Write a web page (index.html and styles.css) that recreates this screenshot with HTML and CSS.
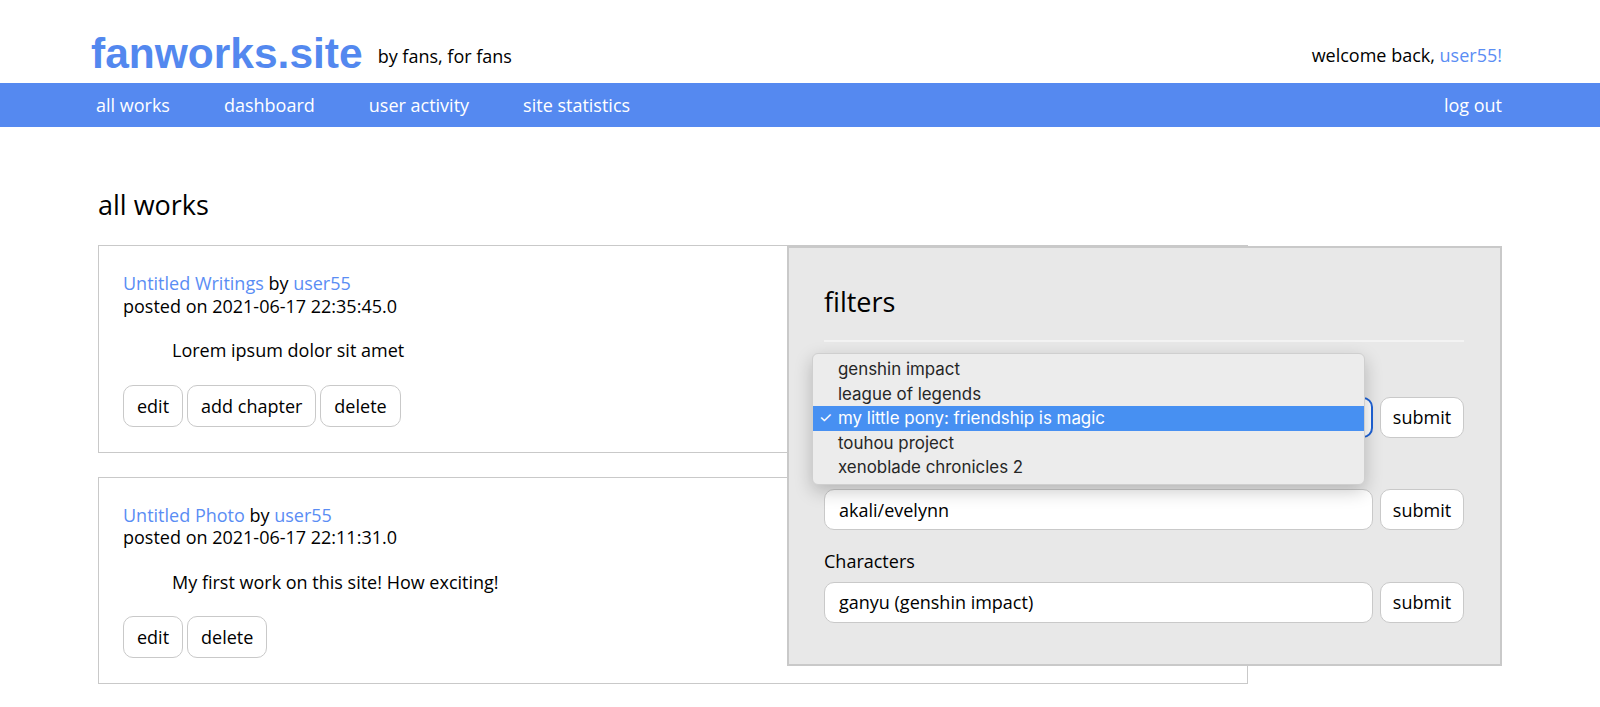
FILE: index.html
```html
<!DOCTYPE html>
<html lang="en">
<head>
<meta charset="utf-8">
<title>fanworks.site - all works</title>
<link rel="stylesheet" href="styles.css">
</head>
<body>
<header class="top">
  <a class="logo" href="#">fanworks.site</a>
  <span class="tagline">by fans, for fans</span>
  <span class="welcome">welcome back, <a class="link" href="#">user55!</a></span>
</header>
<nav class="navbar">
  <a href="#">all works</a>
  <a href="#">dashboard</a>
  <a href="#">user activity</a>
  <a href="#">site statistics</a>
  <a class="logout" href="#">log out</a>
</nav>
<main class="content">
  <h2 class="page-title">all works</h2>
  <div class="works">
    <article class="work">
      <div class="work-head"><a class="link" href="#">Untitled Writings</a> by <a class="link" href="#">user55</a></div>
      <div class="work-date">posted on 2021-06-17 22:35:45.0</div>
      <p class="work-summary">Lorem ipsum dolor sit amet</p>
      <div class="actions">
        <button class="btn">edit</button>
        <button class="btn">add chapter</button>
        <button class="btn">delete</button>
      </div>
    </article>
    <article class="work">
      <div class="work-head"><a class="link" href="#">Untitled Photo</a> by <a class="link" href="#">user55</a></div>
      <div class="work-date">posted on 2021-06-17 22:11:31.0</div>
      <p class="work-summary">My first work on this site! How exciting!</p>
      <div class="actions">
        <button class="btn">edit</button>
        <button class="btn">delete</button>
      </div>
    </article>
  </div>
</main>
<aside class="filters">
  <h2 class="filters-title">filters</h2>
  <hr class="rule">
  <div class="field field-open">
    <label class="field-label">Fandoms</label>
    <div class="field-row">
      <div class="select">my little pony: friendship is magic</div>
      <button class="btn submit">submit</button>
    </div>
    <ul class="popup">
      <li>genshin impact</li>
      <li>league of legends</li>
      <li class="selected"><span class="check">✓</span>my little pony: friendship is magic</li>
      <li>touhou project</li>
      <li>xenoblade chronicles 2</li>
    </ul>
  </div>
  <div class="field">
    <label class="field-label">Relationships</label>
    <div class="field-row">
      <input class="text-input" type="text" value="akali/evelynn">
      <button class="btn submit">submit</button>
    </div>
  </div>
  <div class="field">
    <label class="field-label">Characters</label>
    <div class="field-row">
      <input class="text-input" type="text" value="ganyu (genshin impact)">
      <button class="btn submit">submit</button>
    </div>
  </div>
</aside>
</body>
</html>
```
FILE: styles.css
```css
* { box-sizing: border-box; }

html, body {
  margin: 0;
  padding: 0;
}

body {
  position: relative;
  font-family: "Open Sans", "Noto Sans", sans-serif;
  font-size: 18px;
  line-height: 22.5px;
  color: #000;
  background: #fff;
  overflow: hidden;
}

a { text-decoration: none; }

.link { color: #5a8df4; }

/* header */
.top {
  display: flex;
  align-items: flex-end;
  height: 83px;
  padding: 0 98px 8px 91px;
}

.logo {
  font-family: "Liberation Sans", Arial, sans-serif;
  font-weight: bold;
  font-size: 42.5px;
  line-height: 1;
  color: #5388ef;
}

.tagline {
  margin: 0 0 8px 15px;
}

.welcome {
  margin: 0 0 9px auto;
}

/* nav */
.navbar {
  display: flex;
  align-items: center;
  gap: 54px;
  height: 44px;
  padding: 0 98px 0 96px;
  background: #5589f0;
}

.navbar a {
  color: #fff;
}

.navbar .logout {
  margin-left: auto;
}

/* main */
.content {
  padding: 0 98px;
}

.page-title {
  margin: 61px 0 23px;
  font-size: 27px;
  line-height: 34px;
  font-weight: normal;
}

.works {
  display: flex;
  flex-direction: column;
  gap: 24px;
  width: 1150px;
}

.work {
  border: 1px solid #c9c9c9;
  padding: 26px 24px 25px;
}

.work-summary {
  margin: 22px 0 0;
  padding-left: 49px;
}

.actions {
  display: flex;
  gap: 4px;
  margin-top: 23px;
}

.btn {
  height: 42px;
  padding: 0 13px;
  font-family: inherit;
  font-size: 18px;
  color: #000;
  background: #fff;
  border: 1px solid #c9c9c9;
  border-radius: 10px;
}

/* filters panel */
.filters {
  position: absolute;
  top: 246px;
  right: 98px;
  width: 715px;
  height: 420px;
  padding: 37px 36px 0 35px;
  background: #e8e8e8;
  border: 2px solid #c9c9c9;
}

.filters-title {
  margin: 0;
  font-size: 27px;
  line-height: 34px;
  font-weight: normal;
}

.rule {
  margin: 21px 0 0;
  height: 2px;
  border: 0;
  background: #f3f3f3;
}

.field {
  position: relative;
  margin-top: 20px;
}

.rule + .field {
  margin-top: 23px;
}

.field-open {
  z-index: 2;
}

.field-label {
  display: block;
}

.field-row {
  display: flex;
  gap: 7px;
  margin-top: 9px;
}

.select,
.text-input {
  flex: 1;
  height: 41px;
  padding: 0 14px;
  font-family: inherit;
  font-size: 18px;
  line-height: 39px;
  color: #000;
  background: #fff;
  border: 1px solid #c9c9c9;
  border-radius: 10px;
  outline: none;
}

.select {
  border: 2px solid #1f63d6;
  line-height: 37px;
}

.submit {
  width: 84px;
  height: 41px;
  padding: 0;
}

/* native-like select popup */
.popup {
  position: absolute;
  top: -12px;
  left: -12px;
  width: 553px;
  margin: 0;
  padding: 3px 0 4px;
  list-style: none;
  font-family: Inter, "Liberation Sans", sans-serif;
  font-size: 16.9px;
  line-height: 24.5px;
  color: #262626;
  background: #ececec;
  border: 1px solid #cfcfcf;
  border-radius: 6px;
  box-shadow: 0 6px 18px rgba(0, 0, 0, 0.22);
}

.popup li {
  position: relative;
  padding-left: 25px;
}

.popup .selected {
  background: #4790f2;
  color: #fff;
}

.popup .check {
  position: absolute;
  left: 6px;
  top: 0;
  font-size: 15px;
}
```
